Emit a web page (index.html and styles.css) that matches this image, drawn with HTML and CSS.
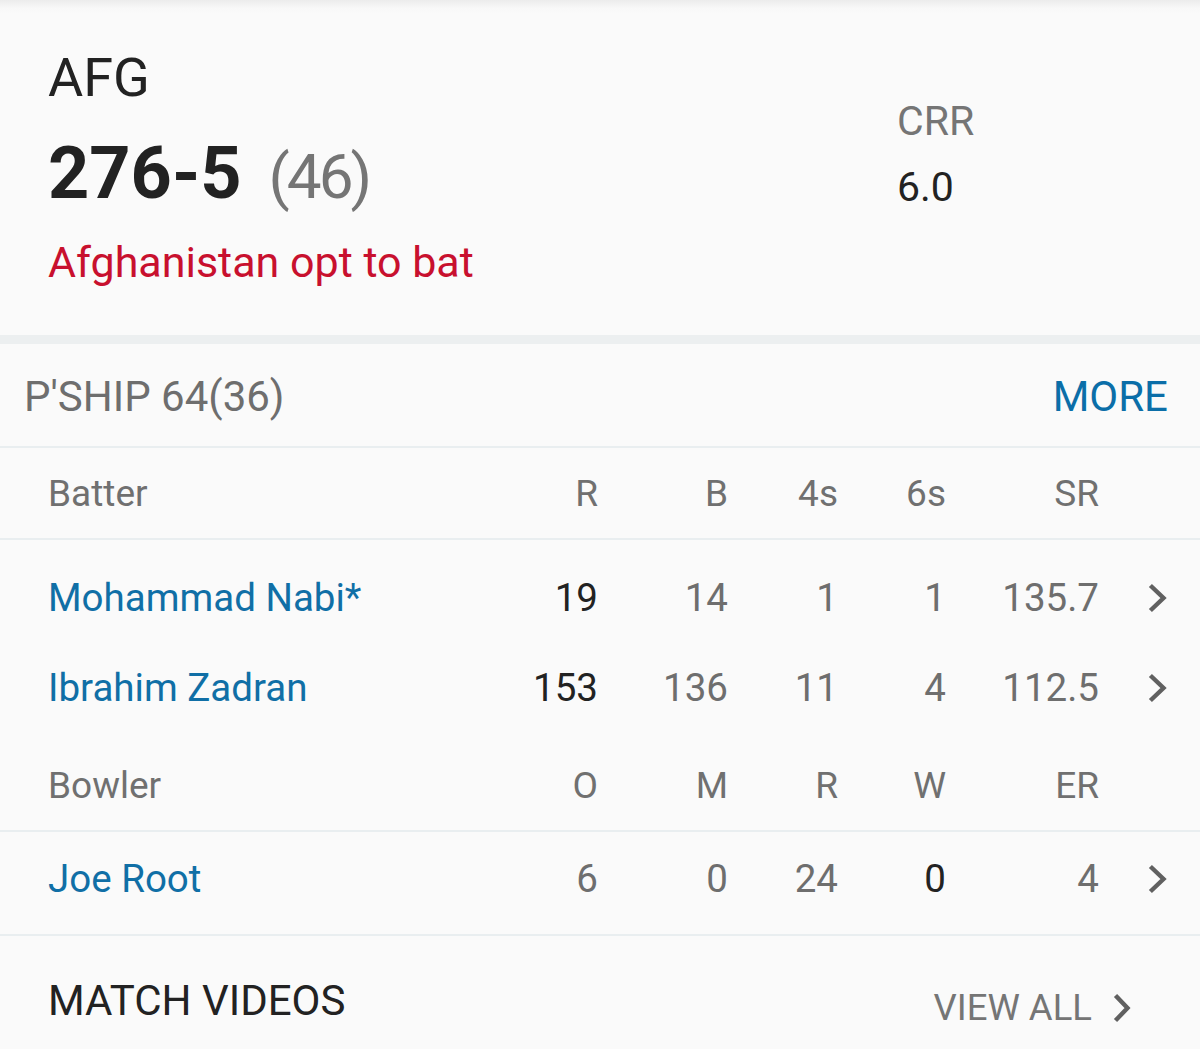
FILE: index.html
```html
<!DOCTYPE html>
<html>
<head>
<meta charset="utf-8">
<link rel="stylesheet" href="styles.css">
</head>
<body>
<div class="page">
  <section class="summary">
    <div class="summary-main">
      <div class="team">AFG</div>
      <div class="score"><span class="runs">276-5</span><span class="overs">(46)</span></div>
      <div class="toss">Afghanistan opt to bat</div>
    </div>
    <div class="summary-side">
      <div class="crr-label">CRR</div>
      <div class="crr-value">6.0</div>
    </div>
  </section>
  <div class="band"></div>
  <div class="pship">
    <span class="pship-text">P'SHIP 64(36)</span>
    <span class="more">MORE</span>
  </div>
  <div class="table">
    <div class="row head first-head">
      <span class="name">Batter</span><span class="num">R</span><span class="num">B</span><span class="num">4s</span><span class="num">6s</span><span class="num">SR</span><span></span>
    </div>
    <div class="body batters">
      <div class="row player">
        <span class="name link">Mohammad Nabi*</span><span class="num dark">19</span><span class="num">14</span><span class="num">1</span><span class="num">1</span><span class="num">135.7</span>
        <span class="chev"><svg viewBox="0 0 20 30" width="20" height="30"><path d="M4 4 L15.5 15 L4 26" fill="none" stroke="#606060" stroke-width="4.4" stroke-linecap="square"/></svg></span>
      </div>
      <div class="row player">
        <span class="name link">Ibrahim Zadran</span><span class="num dark">153</span><span class="num">136</span><span class="num">11</span><span class="num">4</span><span class="num">112.5</span>
        <span class="chev"><svg viewBox="0 0 20 30" width="20" height="30"><path d="M4 4 L15.5 15 L4 26" fill="none" stroke="#606060" stroke-width="4.4" stroke-linecap="square"/></svg></span>
      </div>
      <div class="row head bowl-head">
        <span class="name">Bowler</span><span class="num">O</span><span class="num">M</span><span class="num">R</span><span class="num">W</span><span class="num">ER</span><span></span>
      </div>
    </div>
    <div class="body bowlers">
      <div class="row player">
        <span class="name link">Joe Root</span><span class="num">6</span><span class="num">0</span><span class="num">24</span><span class="num dark">0</span><span class="num">4</span>
        <span class="chev"><svg viewBox="0 0 20 30" width="20" height="30"><path d="M4 4 L15.5 15 L4 26" fill="none" stroke="#606060" stroke-width="4.4" stroke-linecap="square"/></svg></span>
      </div>
    </div>
  </div>
  <div class="videos">
    <span class="videos-title">MATCH VIDEOS</span>
    <span class="view-all">VIEW ALL <svg viewBox="0 0 18 30" width="18" height="30"><path d="M4 4 L14.5 15 L4 26" fill="none" stroke="#606060" stroke-width="4.4" stroke-linecap="square"/></svg></span>
  </div>
</div>
</body>
</html>
```
FILE: styles.css
```css
html, body {
  margin: 0;
  padding: 0;
  background: #fafafa;
}
.page {
  width: 1200px;
  height: 1049px;
  overflow: hidden;
  font-family: Roboto, "Noto Sans", sans-serif;
  color: #222;
  background: linear-gradient(#ececec 0, #f8f8f8 8px, #fafafa 14px);
}
.summary {
  display: grid;
  grid-template-columns: 849px 1fr;
  padding: 48px 0 48px 48px;
}
.team {
  font-size: 54px;
  line-height: 60px;
  color: #222;
}
.score {
  margin-top: 26px;
  height: 80px;
  display: flex;
  align-items: baseline;
}
.runs {
  font-size: 72px;
  line-height: 80px;
  font-weight: 700;
  color: #222;
}
.overs {
  font-size: 62px;
  line-height: 80px;
  color: #757575;
  margin-left: 27px;
  letter-spacing: -3px;
}
.toss {
  margin-top: 23px;
  font-size: 43px;
  line-height: 50px;
  color: #c8102e;
}
.summary-side {
  padding-top: 49px;
}
.crr-label {
  font-size: 41px;
  line-height: 48px;
  color: #757575;
}
.crr-value {
  margin-top: 18px;
  font-size: 41px;
  line-height: 48px;
  color: #222;
}
.band {
  height: 9px;
  background: #eceff0;
}
.pship {
  display: flex;
  justify-content: space-between;
  padding: 28px 32px 24px 24px;
  font-size: 42px;
  line-height: 50px;
  border-bottom: 2px solid #e9eef0;
}
.pship-text {
  color: #6e6e6e;
}
.more {
  color: #0b6ea8;
}
.row {
  display: grid;
  grid-template-columns: 1fr 120px 130px 110px 108px 153px 69px;
  align-items: center;
  padding: 0 32px 0 48px;
}
.num {
  text-align: right;
}
.head {
  font-size: 37px;
  line-height: 44px;
  color: #707070;
}
.first-head {
  padding-top: 24px;
  padding-bottom: 22px;
  border-bottom: 2px solid #e9eef0;
}
.batters {
  padding-top: 13px;
}
.player {
  height: 90px;
  font-size: 38.5px;
  line-height: 44px;
  color: #6e6e6e;
}
.bowl-head {
  padding-top: 31px;
  padding-bottom: 22px;
  border-bottom: 2px solid #e9eef0;
}
.bowlers .player {
  height: auto;
  padding-top: 25px;
  padding-bottom: 33px;
  border-bottom: 2px solid #e9eef0;
}
.link {
  color: #106fa6;
}
.dark {
  color: #222;
}
.chev {
  justify-self: end;
  display: flex;
  align-items: center;
}
.chev svg, .view-all svg {
  display: block;
}
.videos {
  display: flex;
  justify-content: space-between;
  align-items: flex-start;
  padding: 40px 69px 0 48px;
}
.videos-title {
  font-size: 42px;
  line-height: 50px;
  color: #222;
}
.view-all {
  display: flex;
  align-items: center;
  gap: 21px;
  padding-top: 10px;
  font-size: 36.5px;
  line-height: 44px;
  color: #757575;
}
```
